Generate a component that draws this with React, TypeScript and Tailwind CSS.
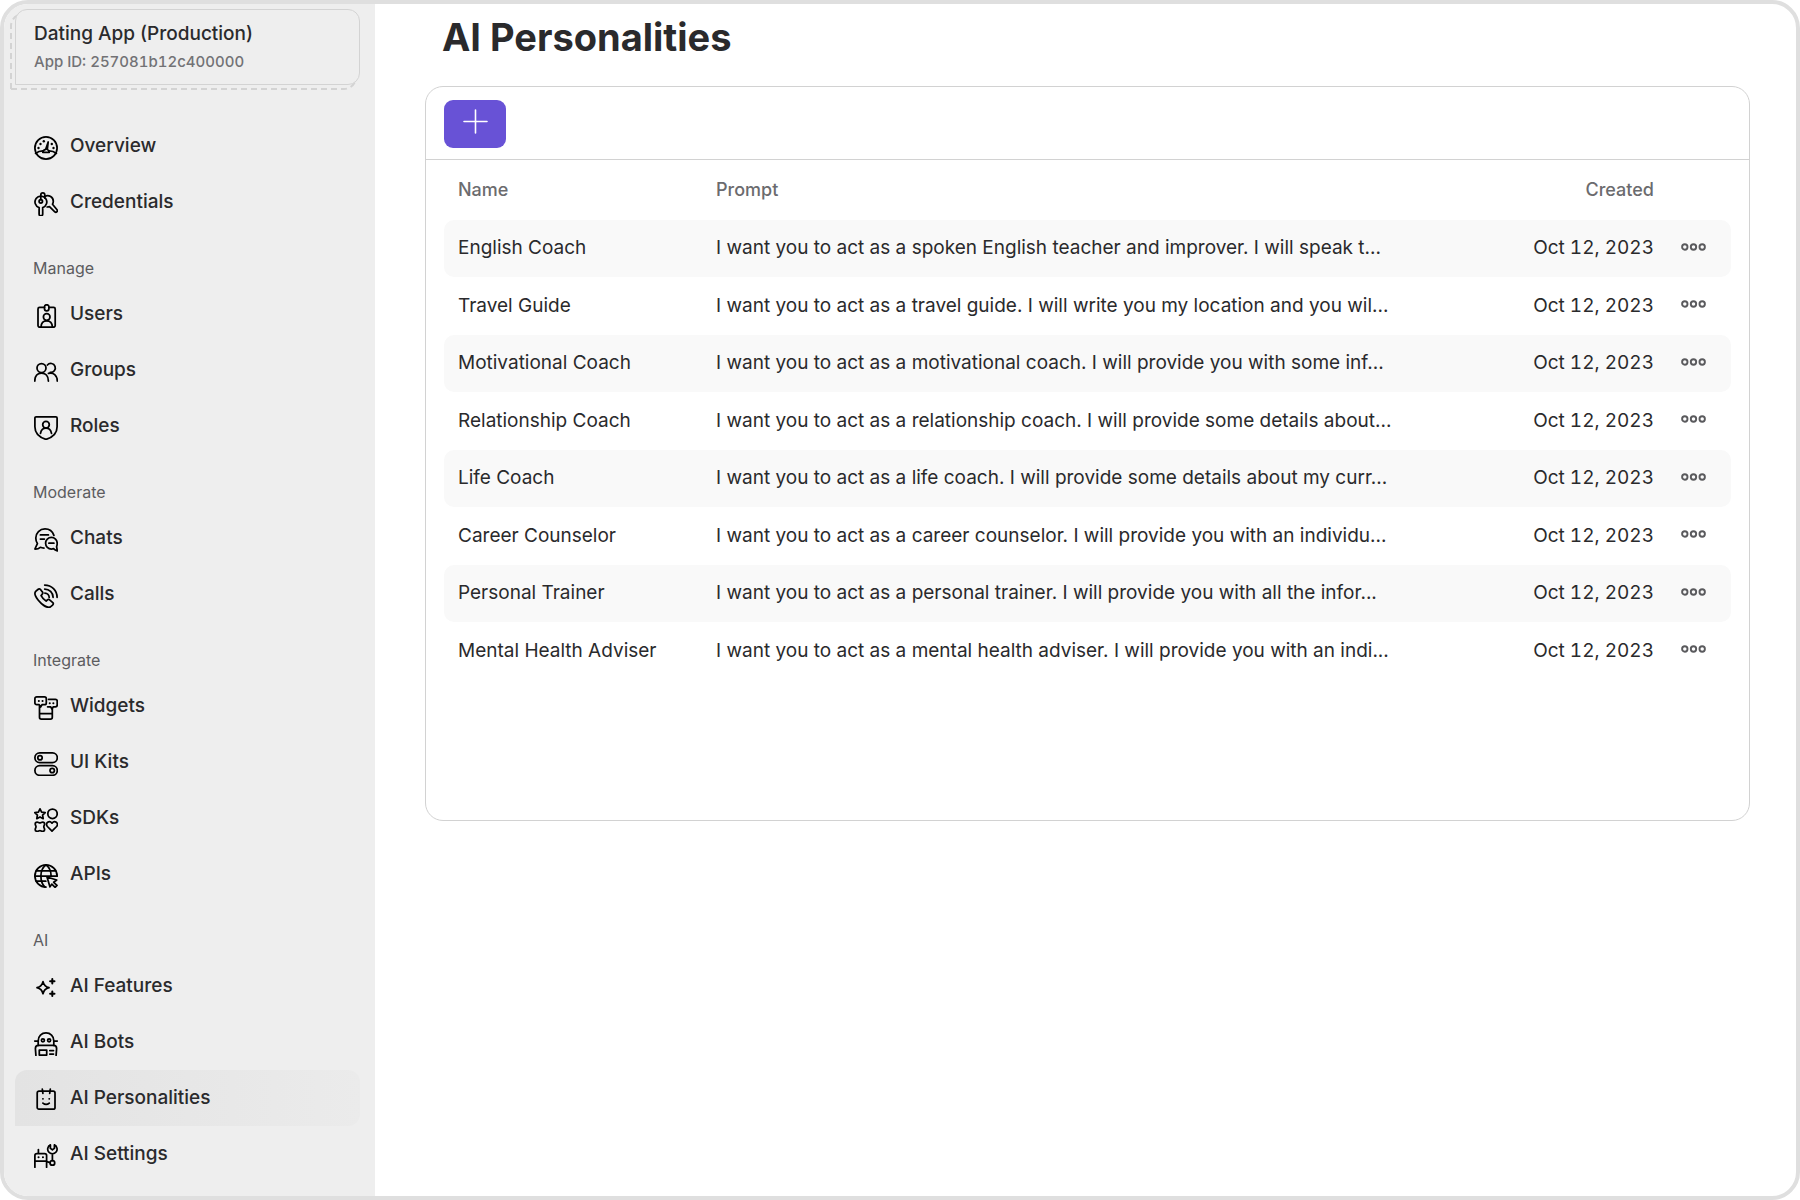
import type { ReactNode } from "react";

const icons: Record<string, ReactNode> = {
  overview: (
    <>
      <circle cx="12" cy="12" r="11.1" />
      <path d="M1.6 17.4c2.4-1.9 4.700-2.500 7.200-2.500M22.400 17.400c-2.400-1.900-4.700-2.500-7.200-2.500" />
      <path d="M8.800 16.300c.2-1.700 1.400-2.800 2.900-3L14.200 6l-.9 7.500c1.100.4 1.800 1.400 1.900 2.800z" />
      <g fill="currentColor" stroke="none">
        <circle cx="4.500" cy="12" r="1.200" />
        <circle cx="6.500" cy="8" r="1.200" />
        <circle cx="9.800" cy="5.300" r="1.200" />
        <circle cx="17.800" cy="8" r="1.200" />
        <circle cx="19.500" cy="12" r="1.200" />
      </g>
    </>
  ),
  credentials: (
    <>
      <path d="M5.100 15.600A5.900 5.900 0 1 1 8.700 15.600V22a1.600 1.600 0 0 1-3.600 0z" />
      <circle cx="6.800" cy="9.300" r="1.700" />
      <path d="M6.800 7.500V3c0-2.800 4-2.800 4 0v3" />
      <path d="M11 4.200c4-1.700 8.300 1.100 8.300 5 0 1.300-.3 2.200-.8 3l4.500 5.600c1.100 1.500-.8 3.200-2.200 2l-5.300-5.100-2.400.3" />
    </>
  ),
  users: (
    <>
      <path d="M10.500 3.400H5.600A1.600 1.600 0 0 0 4 5v16.600a1.600 1.600 0 0 0 1.600 1.600h14a1.600 1.600 0 0 0 1.600-1.600V5a1.600 1.600 0 0 0-1.600-1.600h-4.500" />
      <rect x="10.500" y=".8" width="4.400" height="6" rx="2" />
      <circle cx="12.700" cy="13" r="3.300" />
      <path d="M7 23c.2-3.900 2.500-6.200 5.700-6.200s5.500 2.300 5.700 6.200" />
    </>
  ),
  groups: (
    <>
      <circle cx="7.500" cy="8" r="4.500" />
      <path d="M.8 21c0-5 2.800-8 6.700-8s6.900 3 6.900 8" />
      <path d="M13.400 5a4.500 4.500 0 1 1 2.800 7.400" />
      <path d="M14.500 13.400c4.900-1.500 8.800 2 8.800 7.600" />
    </>
  ),
  roles: (
    <>
      <path d="M2.100.9h19.800c.7 0 1.200.5 1.200 1.200v8.600c0 6.600-4.600 10.600-11.100 12.700C5.500 21.300.9 17.300.9 10.700V2.100C.9 1.400 1.400.9 2.100.9z" />
      <circle cx="12" cy="8.700" r="3.300" />
      <path d="M6.500 17.400c.6-3.200 2.700-5.200 5.500-5.200s4.900 2 5.500 5.200" />
    </>
  ),
  chats: (
    <>
      <path d="M19.900 7.400C18.600 3.500 15.100.9 11 .9 5.800.9 1.800 4.900 1.800 10c0 2.200.5 4 1.600 5.600L.9 21c2.300.1 4-.5 5.400-1.700 1 .5 2.300.7 3.700.7" />
      <path d="M6.400 6.900h8M6.400 11h4" />
      <path d="M23.200 15.200a5.800 5.800 0 1 0-5.800 5.800c.8 0 1.500-.1 2.100-.3 1 1.100 2.200 1.900 3.800 2.200l-.7-4.300c.4-.9.600-2.100.6-3.400z" />
      <path d="M14.900 15.200h5" />
    </>
  ),
  calls: (
    <>
      <path d="M3.900 5.500 1.700 7.400C.2 9 .9 12 4.300 16.200c3.900 4.700 8.900 7.800 11.800 6.900l2.500-2c1-.8.9-1.800.2-2.500l-2.900-2.500c-.9-.8-1.900-.8-2.600-.1l-1.200 1.100c-2-1.200-3.700-3-5-5.500l1.100-1.400c.7-.7.7-1.700 0-2.500L6.500 5.500c-.8-.9-1.700-.8-2.600 0z" />
      <path d="M10.700 1C17.700 1 23.100 6.400 23.100 13.300M10.700 5a8.400 8.400 0 0 1 8.400 8.300M10.900 9.100a4.400 4.400 0 0 1 4.300 4.300" />
    </>
  ),
  widgets: (
    <>
      <path d="M2.700.9h7.800c1 0 1.800.8 1.800 1.800v4.200c0 1-.8 1.800-1.800 1.800H8L6.600 11 5.200 8.700H2.700C1.700 8.700.9 7.900.9 6.900V2.700C.9 1.700 1.700.9 2.700.9z" />
      <path d="M14.500 3.300h7c1 0 1.700.7 1.700 1.700v4.100c0 1-.7 1.700-1.700 1.700h-2.200L18 13.100l-1.400-2.300h-3" />
      <path d="M5.500 10v11.300c0 1 .8 1.800 1.800 1.800h9.200c1 0 1.800-.8 1.800-1.800V13M5.500 17.600h12.800" />
      <path d="M4.800 4.900h.1M8.500 4.900h.1M15.700 7.200h.1M19.300 7.200h.1" strokeWidth="2" />
    </>
  ),
  uikits: (
    <>
      <rect x=".9" y=".9" width="22.400" height="9.600" rx="4.800" />
      <rect x=".9" y="13.700" width="22.400" height="9.600" rx="4.800" />
      <circle cx="6" cy="5.700" r="2.200" />
      <circle cx="18.200" cy="18.500" r="2.200" />
    </>
  ),
  sdks: (
    <>
      <path d="m6 .9 1.600 3.200 3.600.5-2.600 2.500.6 3.600L6 9l-3.200 1.700.6-3.600L.8 4.600l3.600-.5z" />
      <circle cx="18.500" cy="5.800" r="4.700" />
      <path d="M3.200 14c1 0 1.700.9 2.700.9s1.700-.9 2.700-.9c1.300 0 2 .7 2 2 0 1-.8 1.700-.8 2.700s.8 1.700.8 2.700c0 1.300-.7 1.900-2 1.900-1 0-1.700-.7-2.700-.7s-1.700.7-2.700.7c-1.300 0-2-.6-2-1.900 0-1 .8-1.700.8-2.700S1.200 17 1.200 16c0-1.300.7-2 2-2z" />
      <path d="m18 23.100-4.600-4.600c-2.800-3.300 2-6.800 4.600-3.300 2.600-3.500 7.400 0 4.600 3.300z" />
    </>
  ),
  apis: (
    <>
      <path d="M12 23.100A11.100 11.100 0 1 1 23.100 12" />
      <path d="M10.800 23C7.800 20 6.900 16 6.900 12S8.500 3.500 12 .9c3.500 2.600 5.100 7 5.100 11.100" />
      <path d="M2.300 6.800h19.400M.9 12h22.200M2.300 17.200h9.500" />
      <path d="m13 13 9.700 3-3 2.300 3.300 3.100-1.900 1.900-3.300-3.200-1.800 2.800z" fill="#eeeeee" />
    </>
  ),
  features: (
    <>
      <path d="M9 5.700c.9 3.700 2.300 5.100 6 6-3.700.9-5.100 2.300-6 6-.9-3.700-2.300-5.100-6-6 3.700-.9 5.100-2.300 6-6z" />
      <path d="M18.300 3v4.400M16.100 5.200h4.400M18.300 15.600V20M16.100 17.800h4.400" strokeWidth="2" />
    </>
  ),
  bots: (
    <>
      <path d="M4.200 13.400V8.700C4.200 4 7.600.9 12 .9s7.800 3.100 7.800 7.800v4.700M.8 9h3.400M19.800 9h3.400" />
      <path d="M1.900 23.400l-.5-6.800c0-1.900 1.100-3.200 3-3.200h15.200c1.900 0 3 1.300 3 3.200l-.5 6.800" />
      <circle cx="8.900" cy="8.300" r="1.500" />
      <circle cx="15.100" cy="8.300" r="1.500" />
      <path d="M5.300 18h7.400v5.100H5.300zM15.800 18.600h3.700M15.800 22h3.700" />
    </>
  ),
  personalities: (
    <>
      <rect x="3.200" y="3.200" width="17.800" height="18" rx="1.800" />
      <path d="m8.300 1.200.6 4.200M16.300 1.200l-.6 4.200M8.900 15.100c1.800 1.500 4.600 1.500 6.400 0" />
      <path d="M8.900 10.800h.1M15.200 10.800h.1" strokeWidth="1.800" />
    </>
  ),
  settings: (
    <>
      <path d="M.9 23.300V11.600c0-1.200.8-2 2-2h7.700c1.200 0 2 .8 2 2v11.700M.9 17.200h11.700M4.400 9.600V5.500" />
      <path d="M4.500 13.300h.1M8.900 13.300h.1" strokeWidth="2" />
      <path d="M16.400.9a4.700 4.700 0 1 0 4 0V4.400l-2 1.400-2-1.400zM18.400 9.800v6.700M12.800 17.600l3.300 1" />
      <circle cx="18.400" cy="18.900" r="2.300" />
    </>
  ),
};

function Icon({ name }: { name: string }) {
  return (
    <svg
      viewBox="0 0 24 24"
      className="mt-[3px] size-6 shrink-0 text-black"
      fill="none"
      stroke="currentColor"
      strokeWidth="1.75"
      strokeLinecap="round"
      strokeLinejoin="round"
      aria-hidden="true"
    >
      {icons[name]}
    </svg>
  );
}

type NavSection = {
  title?: string;
  items: { label: string; icon: string; active?: boolean }[];
};

const sections: NavSection[] = [
  {
    items: [
      { label: "Overview", icon: "overview" },
      { label: "Credentials", icon: "credentials" },
    ],
  },
  {
    title: "Manage",
    items: [
      { label: "Users", icon: "users" },
      { label: "Groups", icon: "groups" },
      { label: "Roles", icon: "roles" },
    ],
  },
  {
    title: "Moderate",
    items: [
      { label: "Chats", icon: "chats" },
      { label: "Calls", icon: "calls" },
    ],
  },
  {
    title: "Integrate",
    items: [
      { label: "Widgets", icon: "widgets" },
      { label: "UI Kits", icon: "uikits" },
      { label: "SDKs", icon: "sdks" },
      { label: "APIs", icon: "apis" },
    ],
  },
  {
    title: "AI",
    items: [
      { label: "AI Features", icon: "features" },
      { label: "AI Bots", icon: "bots" },
      { label: "AI Personalities", icon: "personalities", active: true },
      { label: "AI Settings", icon: "settings" },
    ],
  },
];

const personalities = [
  ["English Coach", "I want you to act as a spoken English teacher and improver. I will speak t..."],
  ["Travel Guide", "I want you to act as a travel guide. I will write you my location and you wil..."],
  ["Motivational Coach", "I want you to act as a motivational coach. I will provide you with some inf..."],
  ["Relationship Coach", "I want you to act as a relationship coach. I will provide some details about..."],
  ["Life Coach", "I want you to act as a life coach. I will provide some details about my curr..."],
  ["Career Counselor", "I want you to act as a career counselor. I will provide you with an individu..."],
  ["Personal Trainer", "I want you to act as a personal trainer. I will provide you with all the infor..."],
  ["Mental Health Adviser", "I want you to act as a mental health adviser. I will provide you with an indi..."],
];

function AppCard() {
  return (
    <div className="relative isolate">
      <svg
        viewBox="0 0 345 76"
        className="absolute inset-0 -z-10 size-full overflow-visible"
        fill="none"
        stroke="#d3d3d3"
        strokeWidth="2"
        strokeDasharray="6 4"
        aria-hidden="true"
      >
        <path d="M-4 80V17A12 12 0 0 1 8 5M-4 80H329a12 12 0 0 0 12-12" />
      </svg>
      <div className="rounded-xl rounded-bl-none border border-[#d3d3d3] bg-[#eeeeee] px-[18px] py-3">
        <p className="text-[19px] leading-6 font-medium">Dating App (Production)</p>
        <p className="mt-1.5 text-[15px] leading-5 font-medium text-[#727275] tabular-nums">
          App ID: 257081b12c400000
        </p>
      </div>
    </div>
  );
}

function Sidebar() {
  return (
    <aside className="w-[371px] shrink-0 bg-[#eeeeee] pt-[5px] pr-[15px] pl-[11px]">
      <AppCard />
      <nav className="mt-[33px]">
        {sections.map((section) => (
          <section key={section.title ?? "Main"}>
            {section.title && (
              <h2 className="flex h-14 items-center pt-5 pl-[18px] text-base text-[#5c5c5f]">{section.title}</h2>
            )}
            <ul>
              {section.items.map((item) => (
                <li key={item.label}>
                  <a
                    href="#"
                    aria-current={item.active ? "page" : undefined}
                    className={
                      "flex h-14 items-center gap-3 rounded-xl rounded-bl-none pl-[19px] text-[19px] font-medium" +
                      (item.active ? " bg-linear-to-r from-[#e3e3e3] to-[#ebebeb]" : "")
                    }
                  >
                    <Icon name={item.icon} />
                    {item.label}
                  </a>
                </li>
              ))}
            </ul>
          </section>
        ))}
      </nav>
    </aside>
  );
}

function PersonalitiesTable() {
  return (
    <table className="w-full table-fixed text-left">
      <colgroup>
        <col className="w-[258px]" />
        <col />
        <col className="w-[180px]" />
        <col className="w-[77px]" />
      </colgroup>
      <thead>
        <tr className="h-[60px] text-lg text-[#6b6b6e]">
          <th className="pl-[14px] font-medium">Name</th>
          <th className="pl-[14px] font-medium">Prompt</th>
          <th className="text-right font-medium">Created</th>
          <th aria-label="Actions" />
        </tr>
      </thead>
      <tbody>
        {personalities.map(([name, prompt]) => (
          <tr key={name} className="h-[57px] text-[19px] odd:bg-[#f9f9f9] even:h-[58px]">
            <td className="truncate rounded-l-[10px] pl-[14px]">{name}</td>
            <td className="truncate pl-[14px]">{prompt}</td>
            <td className="text-right whitespace-nowrap tabular-nums">Oct 12, 2023</td>
            <td className="rounded-r-[10px] pb-1 pl-[27px]">
              <button type="button" aria-label={`Actions for ${name}`} className="block text-[#5a5a5d]">
                <svg width="25" height="10" viewBox="0 0 25 10" fill="none" stroke="currentColor" strokeWidth="1.9" aria-hidden="true">
                  <circle cx="3.8" cy="5" r="2.7" />
                  <circle cx="12.5" cy="5" r="2.7" />
                  <circle cx="21.2" cy="5" r="2.7" />
                </svg>
              </button>
            </td>
          </tr>
        ))}
      </tbody>
    </table>
  );
}

export default function App() {
  return (
    <div className="min-h-screen bg-white font-[Inter,sans-serif] text-[#2a2a2c]">
      <div className="flex min-h-screen overflow-hidden rounded-[28px] border-4 border-[#dfdfdf]">
        <Sidebar />
        <main className="min-w-0 flex-1 pt-2.5 pr-[46px] pl-[50px]">
          <h1 className="pl-[17px] text-[38px] leading-[46px] font-bold">AI Personalities</h1>
          <div className="mt-[26px] rounded-[18px] border border-[#d2d2d2]">
            <div className="border-b border-[#d2d2d2] px-[18px] pt-[13px] pb-[11px]">
              <button
                type="button"
                aria-label="Add personality"
                className="flex h-12 w-[62px] items-center justify-center rounded-[9px] bg-[#6852d6] pb-[5px] text-white"
              >
                <svg width="25" height="25" viewBox="0 0 25 25" stroke="currentColor" strokeWidth="1.6" strokeLinecap="round" aria-hidden="true">
                  <path d="M12.5 1v23M1 12.5h23" />
                </svg>
              </button>
            </div>
            <div className="px-[18px] pb-[140px]">
              <PersonalitiesTable />
            </div>
          </div>
        </main>
      </div>
    </div>
  );
}
